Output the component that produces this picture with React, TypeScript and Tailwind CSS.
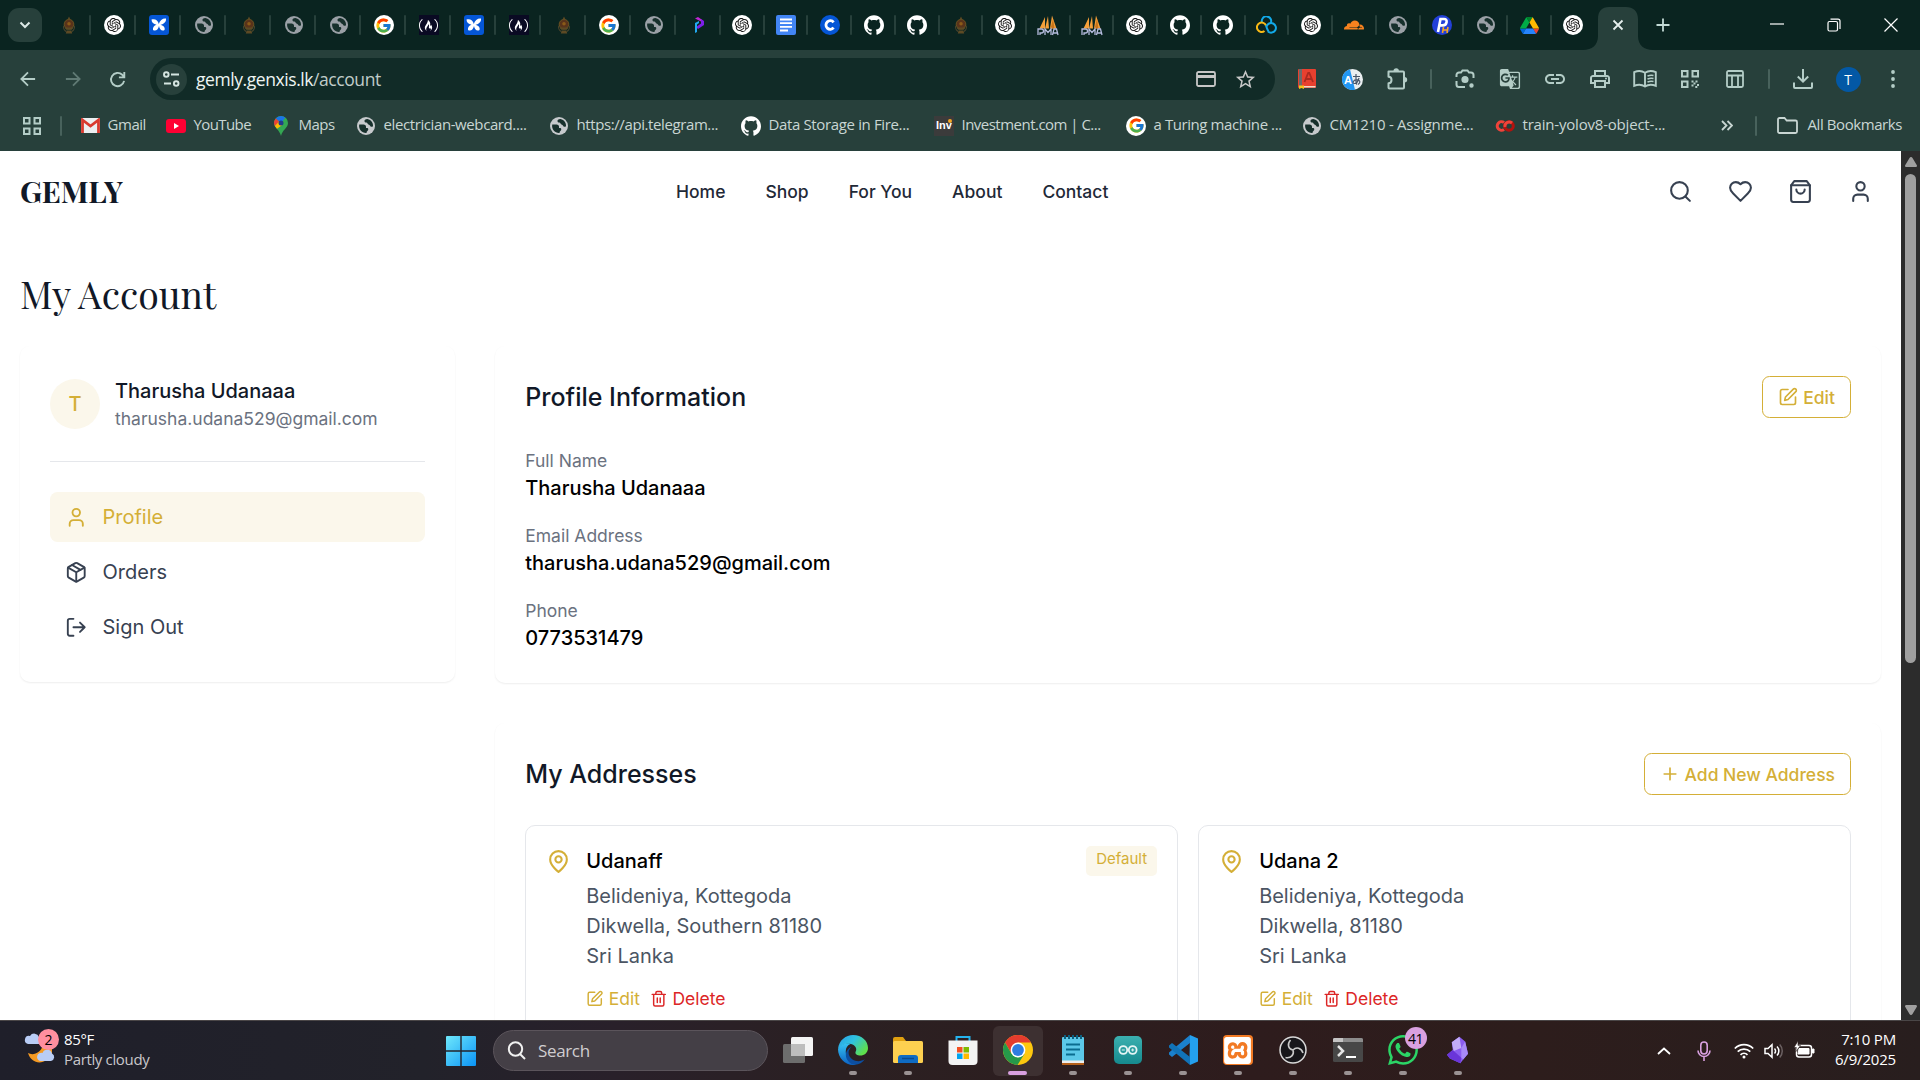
import React from "react";
import { FcGoogle } from "react-icons/fc";
import { SiOpenai, SiGithub, SiFreecodecamp, SiCloudflare, SiXampp, SiWhatsapp } from "react-icons/si";
import { MdGTranslate, MdOutlinePrint, MdLink, MdStarBorder } from "react-icons/md";

const ui = "font-['Open_Sans','Noto_Sans',sans-serif]";

/* ---------- favicons ---------- */
const Emblem = () => (
  <svg width="16" height="20" viewBox="0 0 20 22">
    <circle cx="10" cy="10" r="6" fill="#59331b" stroke="#6b5420" strokeWidth="1.2" />
    <path d="M8 4.500 10 .5l2 4zM4 14h12l-2.500 3h-7zM7 18h6l1 3.500H6z" fill="#5d4a24" />
    <circle cx="10" cy="9.500" r="2.200" fill="#8a5a18" />
    <path d="M3.500 12c-1 3 1 6 3 7M16.500 12c1 3-1 6-3 7" stroke="#4d452c" strokeWidth="1.400" fill="none" />
  </svg>
);
const Gpt = () => (
  <span className="flex size-5 items-center justify-center rounded-full bg-white">
    <SiOpenai size={14} color="#111" />
  </span>
);
const Globe = ({ color = "#9aa0a6" }: { color?: string }) => (
  <svg width="18" height="18" viewBox="0 0 18 18">
    <circle cx="9" cy="9" r="9" fill={color} />
    <path
      d="M2.200 7.500h4.300c1.600 0 2.500 1 2.500 2.200V11h1c.9 0 1.300.6 1.300 1.300 0 1.500-1.800 1.700-1.800 3.700C5 16.300 1.400 12.500 2.200 7.500zM10.500 2.100c-2.500 0-3 1-3 2s.8 1.500 1.800 1.500c1.200 0 1.200 2 2.700 2.200 1.200.2 1 2 2.300 2 .8 0 1.200-.3 1.700-.6.3-3.200-1.700-6.300-5.500-7.100z"
      fill="#17302c"
    />
  </svg>
);
const Google = () => (
  <span className="flex size-5 items-center justify-center rounded-full bg-white">
    <FcGoogle size={17} />
  </span>
);
const Fcc = () => (
  <span className="flex size-5 items-center justify-center bg-[#0a0a23]">
    <SiFreecodecamp size={19} color="#fff" />
  </span>
);
const Butterfly = () => (
  <svg width="20" height="20" viewBox="0 0 20 20">
    <rect width="20" height="20" rx="3" fill="#0556d6" />
    <path d="M9.800 9C9 5 6 3.500 2.500 4.500c0 3 2 4.700 5 5.200C5 10.500 3.500 12.500 4 15c2.500 1.500 5 0 6-4 .5 3.500 3 5.500 5.500 4 .8-2-.5-4.500-4-5.300 3.500-.5 6-3 5.500-6.200-3-.5-6.200 1.500-7.200 5.500z" fill="#fff" />
  </svg>
);
const Purple = () => (
  <svg width="20" height="20" viewBox="0 0 20 20">
    <path d="M6 3.500 9 2l5 3.500-2 1z" fill="#c026d3" />
    <path d="M12 4l3 2v4l-6 4-2-2 5-3.500z" fill="#7c1fe8" />
    <path d="M6 8l4-2v2L8 9.500V17l-2 1z" fill="#22a8f0" />
  </svg>
);
const Docs = () => (
  <svg width="20" height="20" viewBox="0 0 20 20">
    <rect width="20" height="20" rx="2" fill="#4285f4" />
    <path d="M4 4.500h12M4 8.200h12M4 11.900h12M4 15.500h8" stroke="#fff" strokeWidth="1.800" />
  </svg>
);
const BlueC = () => (
  <svg width="20" height="20" viewBox="0 0 20 20">
    <circle cx="10" cy="10" r="10" fill="#0556d6" />
    <path d="M13.600 7.300a4.300 4.300 0 1 0 0 5.400" stroke="#fff" strokeWidth="2.800" fill="none" />
  </svg>
);
const Pma = () => (
  <svg width="20" height="20" viewBox="0 0 20 20" className="overflow-visible">
    <path d="M1.500 13.500 7 2v11.500zM7 13.500 10 1l1 12.500zM12 13.500 14 .5l4.500 13z" fill="#f5a03a" />
    <path d="M12.500 13.500 15 4l1.500 9.500z" fill="#c9741a" />
    <path d="M0 20v-6h3.500q2 0 2 2t-2 2H2v2M7 20v-6l3 3.500 3-3.500v6M14.500 20l1.500-6h2.500L20 20m-5-2h4.500" fill="none" stroke="#b5bbdd" strokeWidth="1.300" />
  </svg>
);
const Rings = () => (
  <svg width="21" height="18" viewBox="0 0 21 18" fill="none" strokeWidth="2">
    <path d="M6 6.500a4.700 4.700 0 1 1 8.500 1" stroke="#12a9e8" />
    <path d="M8.500 15A4.700 4.700 0 1 1 10 9.500" stroke="#f9ba16" />
    <path d="M10.500 10.500a4.800 4.800 0 1 1 1.500 5" stroke="#12a9e8" />
    <path d="M10 9.500q1 3.500 2.500 6" stroke="#12a9e8" />
  </svg>
);
const Ph = () => (
  <svg width="20" height="20" viewBox="0 0 20 20">
    <circle cx="10" cy="10" r="10" fill="#2340d8" />
    <path d="M6 17 8.500 4H12q3 0 2.600 3-.5 3.400-4 3.400H8" fill="none" stroke="#fff" strokeWidth="2.600" />
    <path d="m10.500 18 1-6m3.500 6 1-6m-4.800 3h4" fill="none" stroke="#f5a623" strokeWidth="1.600" />
  </svg>
);
const Drive = () => (
  <svg width="19" height="17" viewBox="0 0 87.3 78">
    <path d="m6.600 66.850 3.850 6.650c.8 1.400 1.950 2.500 3.300 3.300l13.750-23.800H0c0 1.550.4 3.100 1.200 4.500z" fill="#0066da" />
    <path d="M43.650 25 29.900 1.200c-1.350.8-2.500 1.900-3.300 3.300L1.200 48.500A9 9 0 0 0 0 53h27.500z" fill="#00ac47" />
    <path d="M73.550 76.800c1.350-.8 2.500-1.900 3.300-3.300l1.600-2.750L86.100 57.500c.8-1.400 1.200-2.950 1.200-4.500H59.800l5.850 11.500z" fill="#ea4335" />
    <path d="M43.650 25 57.400 1.200C56.050.4 54.500 0 52.900 0H34.400c-1.600 0-3.150.45-4.500 1.200z" fill="#00832d" />
    <path d="M59.800 53H27.500L13.750 76.800c1.350.8 2.900 1.200 4.500 1.200h50.800c1.600 0 3.150-.45 4.500-1.200z" fill="#2684fc" />
    <path d="M73.400 26.500 60.700 4.500c-.8-1.400-1.950-2.500-3.300-3.300L43.650 25 59.800 53h27.450c0-1.550-.4-3.100-1.200-4.500z" fill="#ffba00" />
  </svg>
);
const Git = () => <SiGithub size={20} color="#fff" />;
const Flare = () => <SiCloudflare size={20} color="#f6821f" />;

const wideTabs = [Emblem, Gpt, Butterfly, Globe, Emblem, Globe, Globe, Google, Fcc, Butterfly, Fcc, Emblem, Google, Globe, Purple];
const tabs = [Gpt, Docs, BlueC, Git, Git, Emblem, Gpt, Pma, Pma, Gpt, Git, Git, Rings, Gpt, Flare, Globe, Ph, Globe, Drive, Gpt];

function TabStrip() {
  return (
    <div className="flex h-[50px] bg-[#0a2420]">
      <div className="flex h-[50px] w-[46px] items-center pl-2">
        <div className="flex size-[34px] items-center justify-center rounded-[11px] bg-[#27403b]">
          <svg width="12" height="8" viewBox="0 0 12 8" fill="none" stroke="#dce9e6" strokeWidth="2"><path d="m1.500 1.500 4.500 4.500 4.500-4.500" /></svg>
        </div>
      </div>
      {wideTabs.map((I, i) => (
        <div key={i} className="flex h-[50px] w-[45px] items-center">
          <div className="flex flex-1 justify-center pl-0.5"><I /></div>
          <div className="h-5 w-0.5 rounded bg-[#27403b]" />
        </div>
      ))}
      {tabs.map((I, i) => (
        <div key={i} className="flex h-[50px] w-[43.720px] items-center">
          <div className="flex flex-1 justify-center pl-px"><I /></div>
          <div className={i === 19 ? "w-0.5" : "h-5 w-0.5 rounded bg-[#27403b]"} />
        </div>
      ))}
      <div className="-ml-3 flex items-end">
        <svg width="70" height="43" viewBox="0 0 70 43">
          <path d="M0 43c9 0 15-5 15-14V12C15 4 19 0 26 0h17c7 0 12 4 12 12v17c0 9 6 14 15 14z" fill="#27403b" />
          <path d="m30.500 13.500 9 9m0-9-9 9" stroke="#e6efed" strokeWidth="1.800" />
        </svg>
      </div>
      <div className="flex w-[20px] items-center justify-center">
        <svg width="14" height="14" viewBox="0 0 14 14" stroke="#c3dbd6" strokeWidth="1.800"><path d="M7 .5v13M.5 7h13" /></svg>
      </div>
      <div className="ml-auto flex items-center gap-[43px] pr-[22px]">
        <svg width="14" height="14" viewBox="0 0 14 14" stroke="#fff" strokeWidth="1.200"><path d="M0 6h14" /></svg>
        <svg width="14" height="14" viewBox="0 0 14 14" stroke="#fff" strokeWidth="1.200" fill="none"><rect x="1" y="3.500" width="9.500" height="9.500" rx="1.500" /><path d="M3.500 1.200H11a2 2 0 0 1 2 2V11" /></svg>
        <svg width="14" height="14" viewBox="0 0 14 14" stroke="#fff" strokeWidth="1.200"><path d="m.5.5 13 13m0-13-13 13" /></svg>
      </div>
    </div>
  );
}

const tint = "#b4cdc7";
const Cell = ({ children }: { children: React.ReactNode }) => <div className="flex w-[45px] items-center justify-center">{children}</div>;
const Bar = () => <div className="h-5 w-0.5 rounded bg-[#48625c]" />;

function Toolbar() {
  return (
    <div className="flex h-[58px] items-center">
      <div className="flex w-[150px] pl-[5px]">
        <Cell><svg width="16" height="16" viewBox="0 0 18 18" fill="none" stroke={tint} strokeWidth="2"><path d="M9 1.500 1.500 9 9 16.500M2 9h15" /></svg></Cell>
        <Cell><svg width="16" height="16" viewBox="0 0 18 18" fill="none" stroke="#607a74" strokeWidth="2"><path d="M9 1.500 16.500 9 9 16.500M16 9H1" /></svg></Cell>
        <Cell><svg width="17" height="17" viewBox="0 0 18 18" fill="none" stroke={tint} strokeWidth="2"><path d="M16 10.500A7 7 0 1 1 14 4l2 2.500M16.200 1v5.800h-5.700" /></svg></Cell>
      </div>
      <div className="flex h-[42px] w-[1125px] items-center rounded-full bg-[#112b27] pl-1.5">
        <div className="flex size-[31px] items-center justify-center rounded-full bg-[#27403b]">
          <svg width="17" height="16" viewBox="0 0 17 16" fill="none" stroke="#d5e5e1" strokeWidth="1.900"><circle cx="3.300" cy="3.500" r="2.300" /><path d="M8 3.500h8M1 12.500h7" /><circle cx="13.200" cy="12.500" r="2.300" /></svg>
        </div>
        <div className={`${ui} ml-[9px] text-[17.500px] tracking-[-0.430px] text-[#eef5f3]`}>gemly.genxis.lk<span className="text-[#c0ccc9]">/account</span></div>
        <div className="ml-auto flex items-center gap-[18px] pr-[18px]">
          <svg width="20" height="16" viewBox="0 0 20 16" fill="none" stroke="#c7c7c7" strokeWidth="1.800"><rect x="1" y="1" width="18" height="14" rx="1.500" /><path d="M1 5.500h18" strokeWidth="3" /></svg>
          <MdStarBorder size={23} color="#c7c7c7" />
        </div>
      </div>
      <div className="flex items-center pl-[9.500px]">
        <Cell>
          <svg width="18" height="20" viewBox="0 0 18 20"><rect width="18" height="19" rx="1" fill="#e8402f" /><path d="M1 0h3v17H1z" fill="#6d6a6a" /><path d="M3 17h14.500v1.500H3z" fill="#f3d9c8" /><path d="M1 16.500h5V20l-2.500-1L1 20z" fill="#f5c518" /><path d="m6.500 13 3.700-9h1.100l3.700 9m-7-3h5.500" fill="none" stroke="#ab2a20" strokeWidth="1.800" /></svg>
        </Cell>
        <Cell>
          <svg width="21" height="21" viewBox="0 0 21 21"><circle cx="10.500" cy="10.500" r="10.500" fill="#e9eef0" /><path d="M8 .3A10.500 10.500 0 1 0 13 20.700z" fill="#2196f3" /><text x="2" y="15" fontSize="11" fontWeight="700" fontFamily="Liberation Sans" fill="#fff">A</text><path d="M11 7.500h7M14 5v7.500q0 2 1 3M17 9q-1.500 5.500-4.500 5.500-2 0-1.200-2 1.700-2.700 5.200-1.500 3 1.700-.5 4.500" fill="none" stroke="#475569" strokeWidth="1.200" /></svg>
        </Cell>
        <Cell>
          <svg width="21" height="22" viewBox="0 0 21 22" fill="none" stroke={tint} strokeWidth="2"><path d="M1.500 3.500H16a1 1 0 0 1 1 1v15a1 1 0 0 1-1 1H2.500a1 1 0 0 1-1-1v-4.300c4 0 4-6.400 0-6.400z" strokeLinejoin="round" /><path d="M6.500 3a2.700 2.700 0 0 1 5.400 0zM17.500 9a2.700 2.700 0 0 1 0 5.400z" fill={tint} stroke="none" /></svg>
        </Cell>
      </div>
      <div className="flex w-[23px] justify-center"><Bar /></div>
      <div className="flex items-center">
        <Cell>
          <svg width="20" height="20" viewBox="0 0 20 20" fill="none" stroke={tint} strokeWidth="2"><path d="M1.500 8V6a2.500 2.500 0 0 1 2.500-2.500h2L7.500 1.500h5L14 3.500h2A2.500 2.500 0 0 1 18.500 6v3M1.500 12v3.500A2.500 2.500 0 0 0 4 18h6" /><circle cx="10" cy="10.500" r="2.600" fill={tint} /><circle cx="16.500" cy="16.500" r="1.200" fill={tint} /></svg>
        </Cell>
        <Cell><MdGTranslate size={22} color={tint} /></Cell>
        <Cell><MdLink size={24} color={tint} /></Cell>
        <Cell><MdOutlinePrint size={24} color={tint} /></Cell>
        <Cell>
          <svg width="24" height="18" viewBox="0 0 24 18" fill="none" stroke={tint} strokeWidth="1.900"><path d="M12 16.500C9 14.500 4.500 14.500 1.200 15.800V2.200C4.500.8 9 .8 12 2.800c3-2 7.500-2 10.800-.6v13.600c-3.300-1.300-7.800-1.300-10.800.7zM12 2.800v13.700" /><path d="M14.500 6q3-1.200 6-.5M14.500 9q3-1.200 6-.5M14.500 12q3-1.200 6-.5" strokeWidth="1.400" /></svg>
        </Cell>
        <Cell>
          <svg width="18" height="18" viewBox="0 0 18 18" fill="none" stroke={tint} strokeWidth="2"><path d="M1 1h5.500v5.500H1zM11.500 1H17v5.500h-5.500zM1 11.500h5.500V17H1z" /><path d="M10.500 10.500h2v2h-2zM14.500 10.500h2v2h-2zM12.500 12.500h2v2h-2zM10.500 14.500h2v2h-2zM16 14h2v2h-2zM14.300 16h2v2h-2z" fill={tint} stroke="none" /></svg>
        </Cell>
        <Cell><svg width="18" height="18" viewBox="0 0 18 18" fill="none" stroke={tint} strokeWidth="1.800"><rect x="1" y="1" width="16" height="16" rx="1.500" /><path d="M1 5.500h16M6 5.500V17M12 5.500V17" /></svg></Cell>
      </div>
      <div className="flex w-[23px] justify-center"><Bar /></div>
      <div className="flex items-center">
        <Cell><svg width="20" height="20" viewBox="0 0 20 20" fill="none" stroke={tint} strokeWidth="2"><path d="M10 0v12M4.800 7.500 10 12.700l5.200-5.200M1 13.500V18a1 1 0 0 0 1 1h16a1 1 0 0 0 1-1v-4.500" /></svg></Cell>
        <Cell><span className={`${ui} flex size-[25px] items-center justify-center rounded-full bg-[#0358a5] text-[14px] text-white`}>T</span></Cell>
        <Cell><svg width="4" height="18" viewBox="0 0 4 18" fill={tint}><circle cx="2" cy="2" r="1.900" /><circle cx="2" cy="9" r="1.900" /><circle cx="2" cy="16" r="1.900" /></svg></Cell>
      </div>
    </div>
  );
}

const Mail = () => (
  <svg width="19" height="15" viewBox="0 0 19 15"><rect width="19" height="15" rx="1.500" fill="#eceff1" /><path d="M1.500 15V2L9.500 8l8-6v13" fill="none" stroke="#d93a2f" strokeWidth="2.800" /></svg>
);
const Tube = () => (
  <svg width="20" height="14" viewBox="0 0 20 14"><rect width="20" height="14" rx="3" fill="#f03" /><path d="m8 4 5 3-5 3z" fill="#fff" /></svg>
);
const Pin = () => (
  <svg width="14" height="20" viewBox="0 0 14 20"><path d="M7 0a7 7 0 0 0-7 7c0 5 5.500 6.500 7 13 1.500-6.500 7-8 7-13a7 7 0 0 0-7-7z" fill="#34a853" /><path d="M7 0a7 7 0 0 0-5.300 2.500L7 7l4.300-5.500A7 7 0 0 0 7 0z" fill="#1a73e8" /><path d="M1.700 2.500A7 7 0 0 0 .8 10L7 7z" fill="#ea4335" /><path d="M.8 10 3 12.700 9 8.500 5 5.500z" fill="#fbbc04" /><circle cx="7" cy="7" r="2.500" fill="#233c8a" /></svg>
);
const LightGlobe = () => <Globe color="#c6c9cc" />;
const Inv = () => (
  <span className="relative flex size-5 items-center justify-center bg-[#3b3b3b] font-['Liberation_Sans',sans-serif] text-[11px] font-bold text-white">Inv<i className="absolute top-[3px] right-[2px] size-[4px] rounded-full bg-[#f5a623]" /></span>
);
const Colab = () => (
  <svg width="20" height="14" viewBox="0 0 20 14" fill="none" strokeWidth="3"><path d="M9 3.500a4.300 4.300 0 1 0 0 7" stroke="#f0433a" /><circle cx="14" cy="7" r="4.300" stroke="#b3120e" /><path d="M10 8a4.300 4.300 0 0 1 7-4" stroke="#f0433a" /></svg>
);

const marks: [React.FC, string, string, string][] = [
  [Mail, "Gmail", "w-[86px]", "tracking-[-0.450px]"],
  [Tube, "YouTube", "w-[105px]", "tracking-[-0.600px]"],
  [Pin, "Maps", "w-[85px]", "tracking-[-0.500px]"],
  [LightGlobe, "electrician-webcard....", "w-[193px]", "tracking-[-0.400px]"],
  [LightGlobe, "https://api.telegram...", "w-[192px]", "tracking-[-0.400px]"],
  [Git, "Data Storage in Fire...", "w-[193px]", "tracking-[-0.360px]"],
  [Inv, "Investment.com | C...", "w-[192px]", "tracking-[-0.520px]"],
  [Google, "a Turing machine ...", "w-[176px]", "tracking-[-0.420px]"],
  [LightGlobe, "CM1210 - Assignme...", "w-[193px]", "tracking-[-0.250px]"],
  [Colab, "train-yolov8-object-...", "w-[193px]", "tracking-[-0.200px]"],
];

function Bookmarks() {
  return (
    <div className={`${ui} flex h-[43px] items-center pb-2 text-[15px] text-[#c9d6d3]`}>
      <div className="flex w-[80px] items-center pl-[23px]">
        <svg width="18" height="18" viewBox="0 0 18 18" fill="none" stroke={tint} strokeWidth="2"><path d="M1 1h5.500v5.500H1zM11.500 1H17v5.500h-5.500zM1 11.500h5.500V17H1zM11.500 11.500H17V17h-5.500z" /></svg>
        <div className="ml-[19px]"><Bar /></div>
      </div>
      {marks.map(([I, t, w, tr], i) => (
        <div key={i} className={`flex shrink-0 items-center gap-[7.500px] ${w}`}>
          <span className="flex w-5 shrink-0 justify-center"><I /></span>
          <span className={`mb-[2px] whitespace-nowrap ${tr}`}>{t}</span>
        </div>
      ))}
      <div className="ml-auto flex items-center pr-[18px]">
        <svg width="12" height="11" viewBox="0 0 12 11" fill="none" stroke="#c9d6d3" strokeWidth="1.800"><path d="m1 1 4.500 4.500L1 10M6.500 1 11 5.500 6.500 10" /></svg>
        <div className="mr-[20px] ml-[22px]"><Bar /></div>
        <svg width="21" height="17" viewBox="0 0 21 17" fill="none" stroke="#c9d6d3" strokeWidth="1.800"><path d="M1 2.500A1.500 1.500 0 0 1 2.500 1h5l2.200 2.500h8.800A1.500 1.500 0 0 1 20 5v9.500a1.500 1.500 0 0 1-1.500 1.500h-16A1.500 1.500 0 0 1 1 14.500z" /></svg>
        <span className="mb-[2px] ml-2.5 tracking-[-0.420px] whitespace-nowrap">All Bookmarks</span>
      </div>
    </div>
  );
}

/* ---------- page icons ---------- */
const Stroke = ({ size, w = 2, children }: { size: number; w?: number; children: React.ReactNode }) => (
  <svg width={size} height={size} viewBox="0 0 24 24" fill="none" stroke="currentColor" strokeWidth={w} strokeLinecap="round" strokeLinejoin="round" className="shrink-0">{children}</svg>
);
const userPath = <><path d="M19 21v-2a4 4 0 0 0-4-4H9a4 4 0 0 0-4 4v2" /><circle cx="12" cy="7" r="4" /></>;
const EditIcon = ({ size }: { size: number }) => (
  <Stroke size={size}><path d="M12 3H5a2 2 0 0 0-2 2v14a2 2 0 0 0 2 2h14a2 2 0 0 0 2-2v-7" /><path d="M18.375 2.625a2.121 2.121 0 1 1 3 3L12 15l-4 1 1-4Z" /></Stroke>
);

function SiteHeader() {
  return (
    <header className="grid h-[80px] grid-cols-[656px_1fr_auto] items-center pr-[28px] pl-5">
      <div className="font-['Playfair_Display','Liberation_Serif',serif] text-[30px] font-bold tracking-[-0.200px] text-[#111827]">GEMLY</div>
      <nav className="flex gap-10 pt-[2px] text-[17.500px] font-medium text-[#1f2937]">
        <span>Home</span><span>Shop</span><span>For You</span><span>About</span><span>Contact</span>
      </nav>
      <div className="flex gap-[35px] text-[#374151]">
        <Stroke size={25}><circle cx="11" cy="11" r="8" /><path d="m21 21-4.300-4.300" /></Stroke>
        <Stroke size={25}><path d="M19 14c1.490-1.460 3-3.210 3-5.500A5.500 5.500 0 0 0 16.500 3c-1.760 0-3 .5-4.500 2-1.500-1.500-2.740-2-4.500-2A5.500 5.500 0 0 0 2 8.500c0 2.300 1.500 4.050 3 5.500l7 7Z" /></Stroke>
        <Stroke size={25}><path d="M6 2 3 6v14a2 2 0 0 0 2 2h14a2 2 0 0 0 2-2V6l-3-4Z" /><path d="M3 6h18" /><path d="M16 10a4 4 0 0 1-8 0" /></Stroke>
        <Stroke size={25}>{userPath}</Stroke>
      </div>
    </header>
  );
}

function Sidebar() {
  return (
    <aside className="h-[336px] w-[435.250px] shrink-0 rounded-[10px] bg-white p-[30px] shadow-[0_1px_2px_rgba(0,0,0,0.07)]">
      <div className="flex h-[85px] items-start gap-[15px]">
        <div className="mt-[2.500px] flex size-[50px] items-center justify-center rounded-full bg-[#fbf7eb] text-[20px] font-medium text-[#d4af37]">T</div>
        <div>
          <div className="text-[20px] leading-[30px] font-medium text-[#111827]">Tharusha Udanaaa</div>
          <div className="text-[17.500px] leading-[25px] text-[#6b7280]">tharusha.udana529@gmail.com</div>
        </div>
      </div>
      <div className="border-t border-[#e5e7eb] pt-[30px]">
        <div className="flex flex-col gap-[5px] text-[20px] text-[#374151]">
          <div className="flex h-[50px] items-center gap-[15px] rounded-[7.500px] bg-[#fbf7eb] px-[15px] text-[#d4af37]"><Stroke size={22.5}>{userPath}</Stroke>Profile</div>
          <div className="flex h-[50px] items-center gap-[15px] px-[15px]">
            <Stroke size={22.5}><path d="m7.500 4.270 9 5.150" /><path d="M21 8a2 2 0 0 0-1-1.730l-7-4a2 2 0 0 0-2 0l-7 4A2 2 0 0 0 3 8v8a2 2 0 0 0 1 1.730l7 4a2 2 0 0 0 2 0l7-4A2 2 0 0 0 21 16Z" /><path d="m3.300 7 8.700 5 8.700-5M12 22V12" /></Stroke>Orders
          </div>
          <div className="flex h-[50px] items-center gap-[15px] px-[15px]">
            <Stroke size={22.5}><path d="M9 21H5a2 2 0 0 1-2-2V5a2 2 0 0 1 2-2h4" /><path d="m16 17 5-5-5-5M21 12H9" /></Stroke>Sign Out
          </div>
        </div>
      </div>
    </aside>
  );
}

const Field = ({ label, value }: { label: string; value: string }) => (
  <div>
    <div className="text-[17.500px] leading-[25px] text-[#6b7280]">{label}</div>
    <div className="text-[20px] leading-[30px] font-medium text-black">{value}</div>
  </div>
);

const GoldButton = ({ icon, label }: { icon: React.ReactNode; label: string }) => (
  <div className="flex h-[42px] items-center gap-[5px] rounded-[7.500px] border border-[#d4af37] px-[15px] text-[17.500px] font-medium text-[#d4af37]">{icon}<span className="pt-[2px]">{label}</span></div>
);

const AddressCard = ({ name, lines, isDefault }: { name: string; lines: string[]; isDefault?: boolean }) => (
  <div className="flex h-[220px] flex-1 items-start rounded-[10px] border border-[#e5e7eb] p-5">
    <div className="mt-[2.500px] text-[#d4af37]">
      <Stroke size={25}><path d="M20 10c0 6-8 12-8 12s-8-6-8-12a8 8 0 0 1 16 0Z" /><circle cx="12" cy="10" r="3" /></Stroke>
    </div>
    <div className="ml-[15px] flex-1">
      <div className="text-[20px] leading-[30px] font-medium text-black">{name}</div>
      <div className="mt-[5px] text-[20px] leading-[30px] text-[#4b5563]">{lines.map((l) => <div key={l}>{l}</div>)}</div>
      <div className="mt-[15px] flex items-center gap-2.5 text-[17.500px] leading-[25px]">
        <span className="flex items-center gap-[5px] text-[#d4af37]"><EditIcon size={17.5} />Edit</span>
        <span className="flex items-center gap-[5px] text-[#dc2626]">
          <Stroke size={17.5}><path d="M3 6h18M19 6v14c0 1-1 2-2 2H7c-1 0-2-1-2-2V6M8 6V4c0-1 1-2 2-2h4c1 0 2 1 2 2v2M10 11v6M14 11v6" /></Stroke>Delete
        </span>
      </div>
    </div>
    {isDefault && <div className="h-[30px] rounded-[5px] bg-[#fbf7eb] px-2.5 pt-[3px] text-[15px] leading-5 text-[#d4af37]">Default</div>}
  </div>
);

function Page() {
  return (
    <div className="flex h-[869px] overflow-hidden bg-white font-['Inter',sans-serif]">
      <main className="w-[1901px]">
        <SiteHeader />
        <h1 className="mt-[37px] ml-5 h-[78px] font-['Playfair_Display','Liberation_Serif',serif] text-[37.500px] leading-[50px] text-[#111827]">My Account</h1>
        <div className="flex items-start gap-[40px] px-5">
          <Sidebar />
          <div className="flex flex-1 flex-col gap-[40px]">
            <section className="rounded-[10px] bg-white p-[30px] shadow-[0_1px_2px_rgba(0,0,0,0.07)]">
              <div className="flex h-[42px] items-center justify-between">
                <h2 className="pt-[2px] text-[25px] font-medium text-[#111827]">Profile Information</h2>
                <GoldButton icon={<EditIcon size={20} />} label="Edit" />
              </div>
              <div className="mt-[30px] flex flex-col gap-5">
                <Field label="Full Name" value="Tharusha Udanaaa" />
                <Field label="Email Address" value="tharusha.udana529@gmail.com" />
                <Field label="Phone" value="0773531479" />
              </div>
            </section>
            <section className="rounded-[10px] bg-white p-[30px] shadow-[0_1px_2px_rgba(0,0,0,0.07)]">
              <div className="flex h-[42px] items-center justify-between">
                <h2 className="pt-[2px] text-[25px] font-medium text-[#111827]">My Addresses</h2>
                <GoldButton icon={<Stroke size={20}><path d="M5 12h14M12 5v14" /></Stroke>} label="Add New Address" />
              </div>
              <div className="mt-[30px] flex gap-5">
                <AddressCard name="Udanaff" lines={["Belideniya, Kottegoda", "Dikwella, Southern 81180", "Sri Lanka"]} isDefault />
                <AddressCard name="Udana 2" lines={["Belideniya, Kottegoda", "Dikwella, 81180", "Sri Lanka"]} />
              </div>
            </section>
          </div>
        </div>
      </main>
      <div className="flex w-[19px] flex-col items-center bg-[#2c2c2c] pt-[6px] pb-[5px]">
        <svg width="12" height="10" viewBox="0 0 12 10" fill="#9f9f9f"><path d="M6 0q1 0 1.500 1L12 8.500q0 1.500-1 1.500H1Q0 10 0 8.500L4.500 1Q5 0 6 0z" /></svg>
        <div className="mt-[7px] h-[489px] w-[11px] rounded-full bg-[#9f9f9f]" />
        <svg className="mt-auto" width="12" height="10" viewBox="0 0 12 10" fill="#9f9f9f"><path d="M6 10q-1 0-1.500-1L0 1.500Q0 0 1 0h10q1 0 1 1.500L7.500 9Q7 10 6 10z" /></svg>
      </div>
    </div>
  );
}

/* ---------- taskbar ---------- */
const TaskView = () => (
  <svg width="30" height="30" viewBox="0 0 30 30"><rect x="8" y="2" width="22" height="19" rx="1.500" fill="#f4f4f4" /><rect y="9" width="22" height="19" rx="1.500" fill="#6d6d6d" /><path d="M8 9h14v12H8z" fill="#bdbdbd" /></svg>
);
const Edge = () => (
  <svg width="30" height="30" viewBox="0 0 30 30">
    <defs>
      <linearGradient id="eg" x1="0" y1="0" x2="1" y2=".6"><stop offset="0" stopColor="#2a9de8" /><stop offset=".5" stopColor="#2fc3e0" /><stop offset="1" stopColor="#5fe04c" /></linearGradient>
      <linearGradient id="eb" x1="0" y1="0" x2="0" y2="1"><stop offset="0" stopColor="#35c1f1" /><stop offset="1" stopColor="#0b62c4" /></linearGradient>
    </defs>
    <path d="M0 14C1 5 8 0 15 0c9 0 15 6 15 13 0 5-4 7.500-7.500 7.500S17 19 17.500 17c2-3 0-7-4.500-8C7 8 2 11 0 14z" fill="url(#eg)" />
    <path d="M0 14c2-4 7-6.500 12.500-5C9 10 7 14 8 19c1 6 6 10 11 10.500C9 32 0 24 0 14z" fill="url(#eb)" />
    <path d="M13.500 12c-4 3-4 9 1 12.500 4 2.600 9 2 12.500-.5-3 4.500-7 6-11 5.500-6-1-9-7-8-11.500.7-3 3-5.300 5.500-6z" fill="#0c4ea0" />
  </svg>
);
const Folder = () => (
  <svg width="30" height="28" viewBox="0 0 30 28"><path d="M0 3a2 2 0 0 1 2-2h8l3 4h15v8H0z" fill="#e0a010" /><rect y="5" width="30" height="22" rx="1.500" fill="#fdd050" /><path d="M5 27v-5a3 3 0 0 1 3-3h14a3 3 0 0 1 3 3v5z" fill="#0f6cc4" /><path d="M9 22.500h12" stroke="#0a4a8f" strokeWidth="1.500" /></svg>
);
const Store = () => (
  <svg width="30" height="30" viewBox="0 0 30 30"><path d="M8.500 7V2h13v5" fill="none" stroke="#25b3ee" strokeWidth="2" /><path d="M.5 5.500h29V26a4 4 0 0 1-4 4h-21a4 4 0 0 1-4-4z" fill="#f3f3f3" /><path d="M9 12h5.500v5.500H9z" fill="#f25022" /><path d="M15.500 12H21v5.500h-5.500z" fill="#7fba00" /><path d="M9 18.500h5.500V24H9z" fill="#00a4ef" /><path d="M15.500 18.500H21V24h-5.500z" fill="#ffb900" /></svg>
);
const Chrome = () => (
  <svg width="30" height="30" viewBox="0 0 30 30"><circle cx="15" cy="15" r="15" fill="#fdc80f" /><path d="M2 7.500A15 15 0 0 1 28 7.500H15l-6.500 11z" fill="#e43c2e" /><path d="M2 7.500 8.500 18.700 15 22.500l-.5 7.500A15 15 0 0 1 2 7.500z" fill="#26994a" /><path d="M14.500 30 21.500 18.700 15 22.500l-6.500-3.800z" fill="#26994a" /><circle cx="15" cy="15" r="7.400" fill="#fff" /><circle cx="15" cy="15" r="5.900" fill="#2f7de1" /></svg>
);
const Notepad = () => (
  <svg width="24" height="30" viewBox="0 0 24 30"><path d="M1 24h22v6H1z" fill="#b5601a" /><rect x="1" y="2" width="22" height="25" rx="1" fill="#5cc8e8" /><path d="M1 25.500h22V28H1z" fill="#eee" /><path d="M4 0v4M8 0v4M12 0v4M16 0v4M20 0v4" stroke="#0b6080" strokeWidth="2" /><path d="M5 9.500h14M5 14.500h14M5 19.500h9" stroke="#0a6c8f" strokeWidth="2" /></svg>
);
const Arduino = () => (
  <span className="flex h-[28px] w-[28px] items-center justify-center rounded-[5px] bg-[linear-gradient(180deg,#3bb0b0,#168a8e)]"><svg width="20" height="10" viewBox="0 0 20 10" fill="none" stroke="#e6f5f5" strokeWidth="1.800"><circle cx="5.300" cy="5" r="3.900" /><circle cx="14.700" cy="5" r="3.900" /><path d="M3.800 5h3M13.200 5h3M14.700 3.500v3" strokeWidth="1" /></svg></span>
);
const Code = () => (
  <svg width="30" height="30" viewBox="0 0 30 30"><path d="M22 0 30 3.500v23L22 30l-.5-8z" fill="#24a0ee" /><path d="M22 0v8L4 22l-3-2.500v-2z" fill="#1b80cc" /><path d="M22 30v-8L4 8 1 10.500v2z" fill="#1173b8" /></svg>
);
const Xampp = () => (
  <span className="flex size-[30px] items-center justify-center rounded-[4px] bg-[#f27a24]"><SiXampp size={27} color="#fff" /></span>
);
const Obs = () => (
  <svg width="28" height="28" viewBox="0 0 28 28"><circle cx="14" cy="14" r="13" fill="#17161a" stroke="#d8d8d8" strokeWidth="1.500" /><g fill="none" stroke="#c9c9c9" strokeWidth="1.600"><path d="M14 14C9 13 8 8 11.500 4M14 14c3.500-3.700 8.300-2 10 3M14 14c1.500 4.800-2 8.500-7.500 7.500" /></g></svg>
);
const Term = () => (
  <svg width="30" height="24" viewBox="0 0 30 24"><rect width="30" height="24" rx="1.500" fill="#474747" /><path d="M0 1.500A1.500 1.500 0 0 1 1.500 0h27A1.500 1.500 0 0 1 30 1.500V4H0z" fill="#8c8c8c" /><path d="M0 1.500A1.500 1.500 0 0 1 1.500 0H10v4H0z" fill="#c4c4c4" /><path d="m5 8 5 5-5 5" fill="none" stroke="#e5e5e5" strokeWidth="2.500" /><path d="M13 19h10" stroke="#fff" strokeWidth="2" /></svg>
);
const Whats = () => (
  <span className="relative"><SiWhatsapp size={30} color="#2bd566" /><span className="absolute -top-[8px] -right-[9px] flex size-[22px] items-center justify-center rounded-full bg-[#d9a0e0] text-[14px] tracking-[-0.500px] text-black">41</span></span>
);
const Obsidian = () => (
  <svg width="21" height="28" viewBox="0 0 22 28"><path d="M13 0 5 6 6 14 0 19l3 4 11 5 3-4 5-6-3-13z" fill="#8a5cf0" /><path d="M13 0 5 6l2 9 8-3z" fill="#c3adf8" /><path d="m6 14-6 5 3 4 11 5 1-6z" fill="#6a35d9" /><path d="m15 12 4-7 3 13-5 6-2-2z" fill="#a88af7" /></svg>
);
const apps: [React.FC, boolean][] = [[TaskView, false], [Edge, true], [Folder, true], [Store, false], [Chrome, true], [Notepad, true], [Arduino, true], [Code, true], [Xampp, true], [Obs, true], [Term, true], [Whats, true], [Obsidian, true]];

function Taskbar() {
  return (
    <div className={`${ui} flex h-[60px] items-center border-t border-[#4a4647] bg-[linear-gradient(90deg,#1f1f2a_0%,#22222a_22%,#29202a_32%,#2b2022_44%,#2e1c1d_65%,#2d1d1c_80%,#281e1e_100%)]`}>
      <div className="flex w-[446px] items-center pb-[4px] pl-6">
        <div className="relative h-[36px] w-[36px]">
          <svg width="36" height="36" viewBox="0 0 36 36"><path d="M4 13h12a4 4 0 0 0-1-7 5 5 0 0 0-9-1 4 4 0 0 0-2 8z" fill="#b9cdf6" /><path d="M4 22c5 3 13 0 15-8l9 2v6c-5 12-20 13-24 0z" fill="#f59a23" /><path d="M16 30h11a4 4 0 0 0 1-7.500 5 5 0 0 0-9.500-.5A4 4 0 0 0 16 30z" fill="#b9cdf6" /></svg>
          <span className="absolute -top-[2px] left-[14px] flex size-[21px] items-center justify-center rounded-full bg-[#ff8f9f] text-[14px] text-black">2</span>
        </div>
        <div className="ml-1 text-[15px] leading-5 tracking-[-0.350px] text-white">85°F<div className="text-[#c9c7cb]">Partly cloudy</div></div>
      </div>
      <svg width="30" height="30" viewBox="0 0 30 30">
        <defs><linearGradient id="wn" x1="0" y1="0" x2="1" y2="1"><stop offset="0" stopColor="#6fe8fb" /><stop offset="1" stopColor="#0a93f5" /></linearGradient></defs>
        <path d="M0 1a1 1 0 0 1 1-1h13.300v14.300H0zM15.700 0H29a1 1 0 0 1 1 1v13.300H15.700zM0 15.700h14.300V30H1a1 1 0 0 1-1-1zM15.700 15.700H30V29a1 1 0 0 1-1 1H15.700z" fill="url(#wn)" />
      </svg>
      <div className="ml-[17px] flex h-[41px] w-[275px] items-center rounded-full border border-[#5b545b] bg-[#443f46] pl-[13px]">
        <svg width="19" height="19" viewBox="0 0 19 19" fill="none" stroke="#f1f1f1" strokeWidth="2"><circle cx="8.500" cy="8" r="6.700" /><path d="m13 13 5 5" /></svg>
        <span className="ml-3 text-[17px] tracking-[-0.350px] text-[#d0cdd0]">Search</span>
      </div>
      <div className="flex pl-[2px]">
        {apps.map(([I, dot], i) => (
          <div key={i} className="flex h-[59px] w-[55px] items-center justify-center">
            <div className={`relative flex size-[50px] items-center justify-center rounded-[6px] ${i === 4 ? "bg-[#3d3031]" : ""}`}>
              <div className="pb-px"><I /></div>
              {dot && <span className={`absolute bottom-[1px] h-[4px] rounded-full ${i === 4 ? "w-[19px] bg-[#d9a0e0]" : "w-[8px] bg-[#9a9293]"}`} />}
            </div>
          </div>
        ))}
      </div>
      <div className="ml-auto flex items-center pr-[24px]">
        <svg width="14" height="8" viewBox="0 0 14 8" fill="none" stroke="#fff" strokeWidth="1.800"><path d="m1 7 6-5.500L13 7" /></svg>
        <svg className="ml-[26px]" width="14" height="20" viewBox="0 0 14 20" fill="none" stroke="#d9a0e0" strokeWidth="1.600"><rect x="3.800" y="1" width="6.400" height="12" rx="3.200" /><path d="M1 9.500a6 6 0 0 0 12 0M7 15.500V20" /></svg>
        <svg className="ml-[23px]" width="20" height="16" viewBox="0 0 20 16" fill="none" stroke="#fff" strokeWidth="1.700"><path d="M.8 5.500a13 13 0 0 1 18.400 0M3.700 8.700a9 9 0 0 1 12.600 0M6.500 11.800a5 5 0 0 1 7 0" /><circle cx="10" cy="14" r="1.500" fill="#fff" stroke="none" /></svg>
        <svg className="ml-[10px]" width="20" height="16" viewBox="0 0 20 16" fill="none" stroke="#fff" strokeWidth="1.500"><path d="M1 5.500h3L8 1.800v12.400L4 10.500H1z" /><path d="M10.500 5.500a3.500 3.500 0 0 1 0 5M13 3.500a6.400 6.400 0 0 1 0 9" /><path d="M15.700 1.500a9.500 9.500 0 0 1 0 13" stroke="#6b6162" /></svg>
        <svg className="mb-[2px] ml-[10px]" width="21" height="17" viewBox="0 0 21 17"><rect x="2.500" y="4.500" width="15" height="11.500" rx="2.500" fill="none" stroke="#fff" strokeWidth="1.500" /><path d="M5 7.500h10v5.500H4zM18.500 8H20v4h-1.500z" fill="#fff" stroke="#fff" /><path d="M4 0 0 6.500h2.500L1.500 11 6.500 4.500H4z" fill="#fff" stroke="#2b1f1f" strokeWidth=".6" /></svg>
        <div className="w-[81px] pb-[3px] text-right text-[15px] leading-5 tracking-[-0.180px] whitespace-nowrap text-white">7:10 PM<br />6/9/2025</div>
      </div>
    </div>
  );
}

export default function App() {
  return (
    <div className="h-[1080px] w-[1920px] overflow-hidden">
      <div className="h-[151px] bg-[#27403b]">
        <TabStrip />
        <Toolbar />
        <Bookmarks />
      </div>
      <Page />
      <Taskbar />
    </div>
  );
}
